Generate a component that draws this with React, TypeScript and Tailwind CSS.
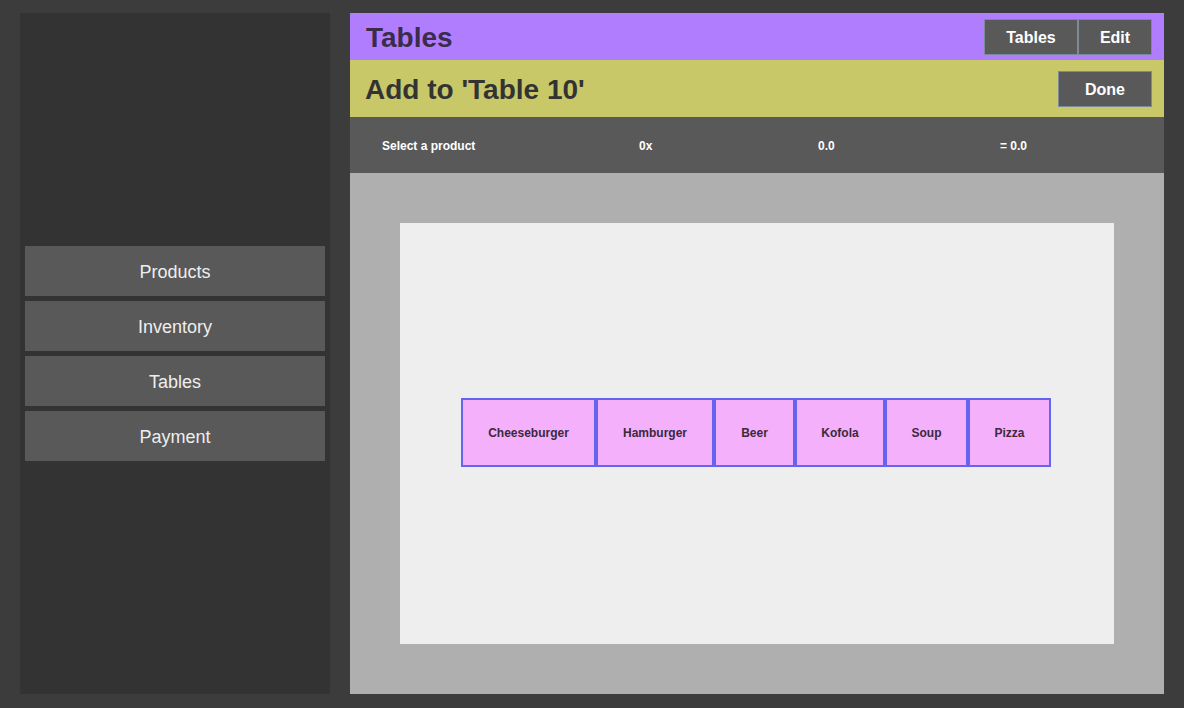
import React from 'react';

const font = { fontFamily: '"Liberation Sans", Arial, sans-serif' };

const navItems = ['Products', 'Inventory', 'Tables', 'Payment'];

const products = [
  { name: 'Cheeseburger', w: 'w-[135px]' },
  { name: 'Hamburger', w: 'w-[118px]' },
  { name: 'Beer', w: 'w-[81px]' },
  { name: 'Kofola', w: 'w-[90px]' },
  { name: 'Soup', w: 'w-[83px]' },
  { name: 'Pizza', w: 'w-[83px]' },
];

const App: React.FC = () => {
  return (
    <div style={font} className="w-[1184px] h-[708px] bg-[#3c3c3c] flex gap-5 pl-5 pr-5 pt-[13px] pb-[14px]">
      {/* Sidebar */}
      <div className="w-[310px] h-full bg-[#333333] flex flex-col justify-center px-[5px] gap-[5px]">
        {navItems.map((item) => (
          <button
            key={item}
            className="h-[50px] w-full bg-[#595959] text-[#eeeeee] text-[18px] flex items-center justify-center pt-[3px]"
          >
            {item}
          </button>
        ))}
      </div>

      {/* Main panel */}
      <div className="w-[814px] h-full flex flex-col">
        {/* Header */}
        <div className="h-[47px] bg-[#b07dff] flex items-center justify-between pl-4 pr-3">
          <h1 className="text-[28px] font-bold text-[#3b2c4b] pt-[2px]">Tables</h1>
          <div className="flex">
            <button className="w-[94px] h-[36px] bg-[#595959] border border-[#7d8a99] text-white font-bold text-[16px] pt-[2px]">
              Tables
            </button>
            <button className="w-[74px] h-[36px] bg-[#595959] border border-[#7d8a99] text-white font-bold text-[16px] pt-[2px]">
              Edit
            </button>
          </div>
        </div>

        {/* Sub header */}
        <div className="h-[57px] bg-[#c8c868] flex items-center justify-between pl-[15px] pr-3">
          <h2 className="text-[28px] font-bold text-[#333333] pt-[2px]">Add to 'Table 10'</h2>
          <button className="w-[94px] h-[36px] bg-[#595959] border border-[#7d8a99] text-white font-bold text-[16px] pt-[2px]">
            Done
          </button>
        </div>

        {/* Summary bar */}
        <div className="h-[56px] bg-[#595959] flex items-center text-white font-bold text-[12px] relative pt-[2px]">
          <span className="absolute left-[32px]">Select a product</span>
          <span className="absolute left-[289px]">0x</span>
          <span className="absolute left-[468px]">0.0</span>
          <span className="absolute left-[650px]">= 0.0</span>
        </div>

        {/* Content */}
        <div className="flex-1 bg-[#afafaf] p-[50px]">
          <div className="w-full h-full bg-[#eeeeee] flex items-center justify-center pb-[2px] pr-[2px]">
            <div className="flex">
              {products.map((p) => (
                <div
                  key={p.name}
                  className={`${p.w} h-[69px] bg-[#f5b0fc] border-2 border-[#6464f0] flex items-center justify-center text-[12px] font-bold text-[#3a2a3a]`}
                >
                  {p.name}
                </div>
              ))}
            </div>
          </div>
        </div>
      </div>
    </div>
  );
};

export default App;
